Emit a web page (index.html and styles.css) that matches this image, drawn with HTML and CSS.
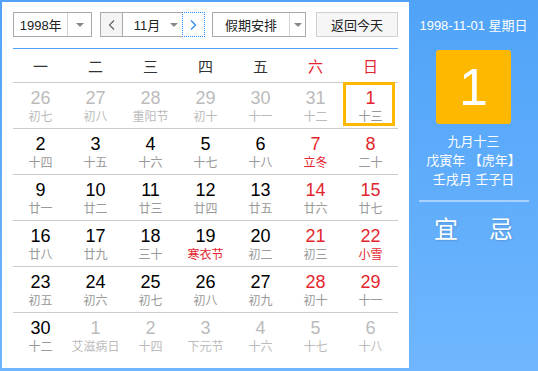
FILE: index.html
```html
<!DOCTYPE html>
<html lang="zh-CN">
<head>
    <meta charset="UTF-8">
    <title>万年历</title>
    <link rel="stylesheet" href="styles.css">
</head>
<body>
<div class="calendar">
    <div class="main">
        <div class="toolbar">
            <div class="select year-select">
                <span class="select-text">1998年</span>
                <span class="select-arrow"><i class="caret"></i></span>
            </div>
            <div class="month-group">
                <button class="nav prev">
                    <svg width="7" height="10" viewBox="0 0 7 10"><polyline points="6,0.5 1.5,5 6,9.5" fill="none" stroke="#666" stroke-width="1.2"/></svg>
                </button>
                <div class="select month-select">
                    <span class="select-text">11月</span>
                    <span class="select-arrow plain"><i class="caret"></i></span>
                </div>
                <button class="nav next">
                    <svg width="7" height="10" viewBox="0 0 7 10"><polyline points="1,0.5 5.5,5 1,9.5" fill="none" stroke="#2d8cf0" stroke-width="1.3"/></svg>
                </button>
            </div>
            <div class="select holiday-select">
                <span class="select-text">假期安排</span>
                <span class="select-arrow"><i class="caret"></i></span>
            </div>
            <button class="today-btn">返回今天</button>
        </div>

        <div class="weekdays">
            <span>一</span><span>二</span><span>三</span><span>四</span><span>五</span>
            <span class="red">六</span><span class="red">日</span>
        </div>

        <div class="days">
            <div class="day other"><b>26</b><em>初七</em></div>
            <div class="day other"><b>27</b><em>初八</em></div>
            <div class="day other"><b>28</b><em>重阳节</em></div>
            <div class="day other"><b>29</b><em>初十</em></div>
            <div class="day other"><b>30</b><em>十一</em></div>
            <div class="day other"><b>31</b><em>十二</em></div>
            <div class="day weekend today"><b>1</b><em>十三</em></div>

            <div class="day"><b>2</b><em>十四</em></div>
            <div class="day"><b>3</b><em>十五</em></div>
            <div class="day"><b>4</b><em>十六</em></div>
            <div class="day"><b>5</b><em>十七</em></div>
            <div class="day"><b>6</b><em>十八</em></div>
            <div class="day weekend"><b>7</b><em class="fest">立冬</em></div>
            <div class="day weekend"><b>8</b><em>二十</em></div>

            <div class="day"><b>9</b><em>廿一</em></div>
            <div class="day"><b>10</b><em>廿二</em></div>
            <div class="day"><b>11</b><em>廿三</em></div>
            <div class="day"><b>12</b><em>廿四</em></div>
            <div class="day"><b>13</b><em>廿五</em></div>
            <div class="day weekend"><b>14</b><em>廿六</em></div>
            <div class="day weekend"><b>15</b><em>廿七</em></div>

            <div class="day"><b>16</b><em>廿八</em></div>
            <div class="day"><b>17</b><em>廿九</em></div>
            <div class="day"><b>18</b><em>三十</em></div>
            <div class="day"><b>19</b><em class="fest">寒衣节</em></div>
            <div class="day"><b>20</b><em>初二</em></div>
            <div class="day weekend"><b>21</b><em>初三</em></div>
            <div class="day weekend"><b>22</b><em class="fest">小雪</em></div>

            <div class="day"><b>23</b><em>初五</em></div>
            <div class="day"><b>24</b><em>初六</em></div>
            <div class="day"><b>25</b><em>初七</em></div>
            <div class="day"><b>26</b><em>初八</em></div>
            <div class="day"><b>27</b><em>初九</em></div>
            <div class="day weekend"><b>28</b><em>初十</em></div>
            <div class="day weekend"><b>29</b><em>十一</em></div>

            <div class="day last"><b>30</b><em>十二</em></div>
            <div class="day other last"><b>1</b><em>艾滋病日</em></div>
            <div class="day other last"><b>2</b><em>十四</em></div>
            <div class="day other last"><b>3</b><em>下元节</em></div>
            <div class="day other last"><b>4</b><em>十六</em></div>
            <div class="day other last"><b>5</b><em>十七</em></div>
            <div class="day other last"><b>6</b><em>十八</em></div>
        </div>
    </div>

    <div class="side">
        <div class="side-date">1998-11-01 星期日</div>
        <div class="big-day">1</div>
        <div class="lunar">
            <div>九月十三</div>
            <div>戊寅年 【虎年】</div>
            <div>壬戌月 壬子日</div>
        </div>
        <div class="side-line"></div>
        <div class="yiji"><span>宜</span><span>忌</span></div>
    </div>
</div>
</body>
</html>
```

FILE: styles.css
```css
body { margin: 0; font-family: "Liberation Sans", "Noto Sans CJK SC", sans-serif; }

.calendar {
    display: flex; width: 538px; height: 371px;
    background: linear-gradient(#50a3f8, #6fb6fe);
}

.main {
    width: 385px; margin: 2px 0 3px 2px; padding: 10px 11px 10px 11px;
    background: #fff;
}

/* toolbar */
.toolbar {
    display: flex; align-items: center; height: 25px;
    padding-bottom: 11px; border-bottom: 1px solid #4ea3f8;
}
.select {
    display: flex; height: 25px; box-sizing: border-box;
    border: 1px solid #aaa; background: #fff; font-size: 13px; color: #222;
}
.select-text { display: flex; align-items: center; justify-content: center; }
.select-arrow {
    display: flex; align-items: center; justify-content: center;
    border-left: 1px solid #d4d4d4;
}
.select-arrow.plain { border-left: none; }
.caret {
    width: 0; height: 0;
    border-left: 4px solid transparent; border-right: 4px solid transparent;
    border-top: 4px solid #888;
}
.year-select { width: 79px; }
.year-select .select-text { width: 54px; }
.year-select .select-arrow { width: 23px; }

.month-group { display: flex; margin-left: 8px; height: 25px; }
.nav {
    width: 23px; height: 25px; padding: 0; box-sizing: border-box;
    display: flex; align-items: center; justify-content: center;
    font: inherit; cursor: pointer;
}
.prev { border: 1px solid #aaa; background: #f4f4f4; }
.next { border: 1px dotted #2d8cf0; background: #fff; }
.month-select { width: 59px; border-left: none; border-right: none; }
.month-select .select-text { width: 40px; padding-left: 4px; }
.month-select .select-arrow { width: 14px; }

.holiday-select { width: 94px; margin-left: 7px; }
.holiday-select .select-text { width: 77px; }
.holiday-select .select-arrow { width: 15px; }

.today-btn {
    width: 82px; height: 25px; margin-left: 10px;
    border: 1px solid #d0d0d0; background: #f6f6f6;
    font: 13px "Liberation Sans", "Noto Sans CJK SC", sans-serif; color: #222;
    padding: 0;
}

/* grid */
.weekdays {
    display: grid; grid-template-columns: repeat(7, 55px);
    height: 33px; border-bottom: 1px solid #ccc;
    font-size: 15px; color: #333; line-height: 36px; text-align: center;
}
.red { color: #e3262e; }

.days { display: grid; grid-template-columns: repeat(7, 55px); }
.day {
    position: relative; height: 45px; border-bottom: 1px solid #ccc;
    text-align: center;
}
.day.last { border-bottom: none; }
.day b {
    display: block; padding-top: 5px;
    font-weight: normal; font-size: 18px; line-height: 20px; color: #000;
}
.day em {
    display: block; margin-top: 1px;
    font-style: normal; font-size: 12px; line-height: 16px; color: #999;
}
.day.weekend b { color: #e3262e; }
.day em.fest { color: #e3262e; }
.day.other b { color: #bbb; }
.day.other em { color: #bbb; }
.day.today::after {
    content: ""; position: absolute; left: 0; top: -1px;
    width: 52px; height: 44px; box-sizing: border-box;
    border: 3px solid #ffb800;
}

/* side panel */
.side {
    flex: 1; display: flex; flex-direction: column; align-items: center;
    padding-top: 16px; color: #fff;
}
.side-date { font-size: 13px; line-height: 20px; }
.big-day {
    width: 75px; height: 74px; margin-top: 14px; border-radius: 3px;
    background: #ffb800; font-size: 52px; line-height: 74px; text-align: center;
}
.lunar { margin-top: 8px; font-size: 13px; line-height: 19px; text-align: center; }
.side-line {
    width: 110px; height: 2px; margin-top: 11px;
    background: rgba(255, 255, 255, 0.45);
}
.yiji {
    display: flex; gap: 31px; margin-top: 13px;
    font-size: 24px; line-height: 30px;
    text-shadow: 1px 1px 2px rgba(0, 0, 0, 0.15);
}
```
